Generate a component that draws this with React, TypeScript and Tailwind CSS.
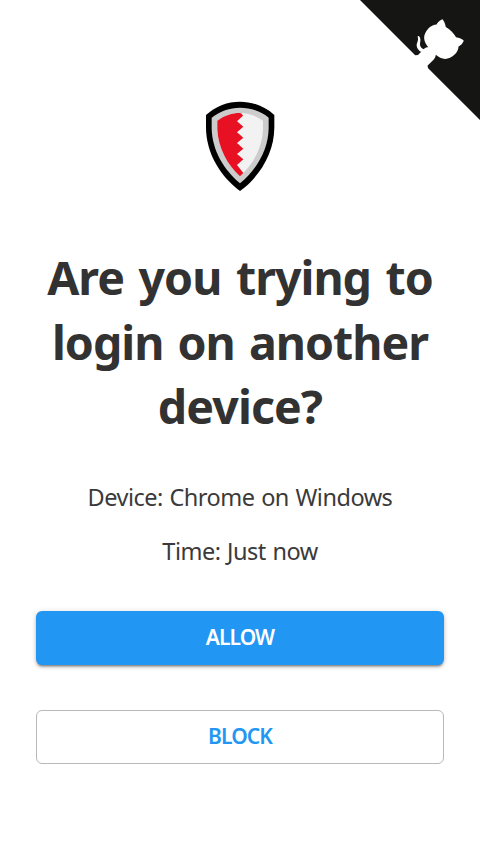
function GithubCorner() {
  return (
    <a href="#" aria-label="View source on GitHub" className="absolute top-0 right-0">
      <svg className="block size-[120px] fill-[#151513] text-white" viewBox="0 0 250 250" aria-hidden="true">
        <path d="M0,0 L115,115 L130,115 L142,142 L250,250 L250,0 Z" />
        <path
          fill="currentColor"
          d="M128.3,109.0 C113.8,99.7 119.0,89.6 119.0,89.6 C122.0,82.7 120.5,78.6 120.5,78.6 C119.2,72.0 123.4,76.3 123.4,76.3 C127.3,80.9 125.5,87.3 125.5,87.3 C122.9,97.6 130.6,101.9 134.4,103.2"
        />
        <path
          fill="currentColor"
          d="M115.0,115.0 C114.9,115.1 118.7,116.5 119.8,115.4 L133.7,101.6 C136.9,99.2 139.9,98.4 142.2,98.6 C133.8,88.0 127.5,74.4 143.8,58.0 C148.5,53.4 154.0,51.2 159.7,51.0 C160.3,49.4 163.2,43.6 171.4,40.1 C171.4,40.1 176.1,42.5 178.8,56.2 C183.1,58.6 187.2,61.8 190.9,65.4 C194.5,69.0 197.7,73.2 200.1,77.6 C213.8,80.2 216.3,84.9 216.3,84.9 C212.7,93.1 206.9,96.0 205.4,96.6 C205.1,102.4 203.0,107.8 198.3,112.5 C181.9,128.9 168.3,122.5 157.7,114.1 C157.9,116.9 156.7,120.9 152.7,124.9 L141.0,136.5 C139.8,137.7 141.6,141.9 141.8,141.8 Z"
        />
      </svg>
    </a>
  );
}

function Shield() {
  return (
    <svg className="block h-[110px] w-[100px]" viewBox="0 0 300 330" aria-hidden="true">
      <path fill="#000" d="M150 35C113 35 77 48 48 75V112C48 190 92 261 150 303C208 261 253 190 253 112V75C223 48 187 35 150 35Z" />
      <path fill="#ccc" d="M150 53C119 53 90 63 65 83V115C66 180 101 240 150 280C199 240 235 180 236 115V83C211 63 181 53 150 53Z" />
      <path fill="#f2f2f2" d="M150 69C126 69 103 77 82 92V118C84 173 113 226 150 259C188 226 217 173 219 118V92C198 77 175 69 150 69Z" />
      <path fill="#e81123" d="M150 69C126 69 103 77 82 92V118C84 173 113 226 150 259L160 249L141 225L160 208L141 192L160 176L141 159L160 143L141 127L160 110L141 94L159 77Q156 69 150 69Z" />
    </svg>
  );
}

export default function App() {
  return (
    <main className="relative flex h-[852px] w-full flex-col items-center overflow-hidden bg-white px-9 pt-[90px] text-center font-['Noto_Sans','Open_Sans',sans-serif] text-[#323232]">
      <GithubCorner />
      <Shield />
      <h1 className="mt-[45px] flex flex-col items-center text-[46.5px] leading-[64.5px] font-bold whitespace-nowrap">
        <span className="tracking-[-1px] [word-spacing:3.5px]">Are you trying to</span>
        <span className="tracking-[-1px] [word-spacing:3px]">login on another</span>
        <span className="tracking-[-0.9px]">device?</span>
      </h1>
      <div className="mt-[42px] flex flex-col gap-[22px] text-[23.5px] leading-8 whitespace-nowrap text-[#3a3a3a]">
        <p className="tracking-[-0.5px] [word-spacing:1px]">Device: Chrome on Windows</p>
        <p className="tracking-[-0.5px] [word-spacing:1px]">Time: Just now</p>
      </div>
      <div className="mt-11 flex w-full flex-col gap-[45px] text-[21px] leading-8 font-semibold tracking-[-0.9px]">
        <button className="h-[54px] rounded-md bg-[#2196f3] pb-0.5 text-white shadow-[0_3px_2px_-2px_rgba(0,0,0,0.3),0_2px_3px_rgba(0,0,0,0.22),0_1px_6px_rgba(0,0,0,0.14)]">
          ALLOW
        </button>
        <button className="h-[54px] rounded-md border border-[#b8b8b8] pb-0.5 text-[#2196f3]">BLOCK</button>
      </div>
    </main>
  );
}
